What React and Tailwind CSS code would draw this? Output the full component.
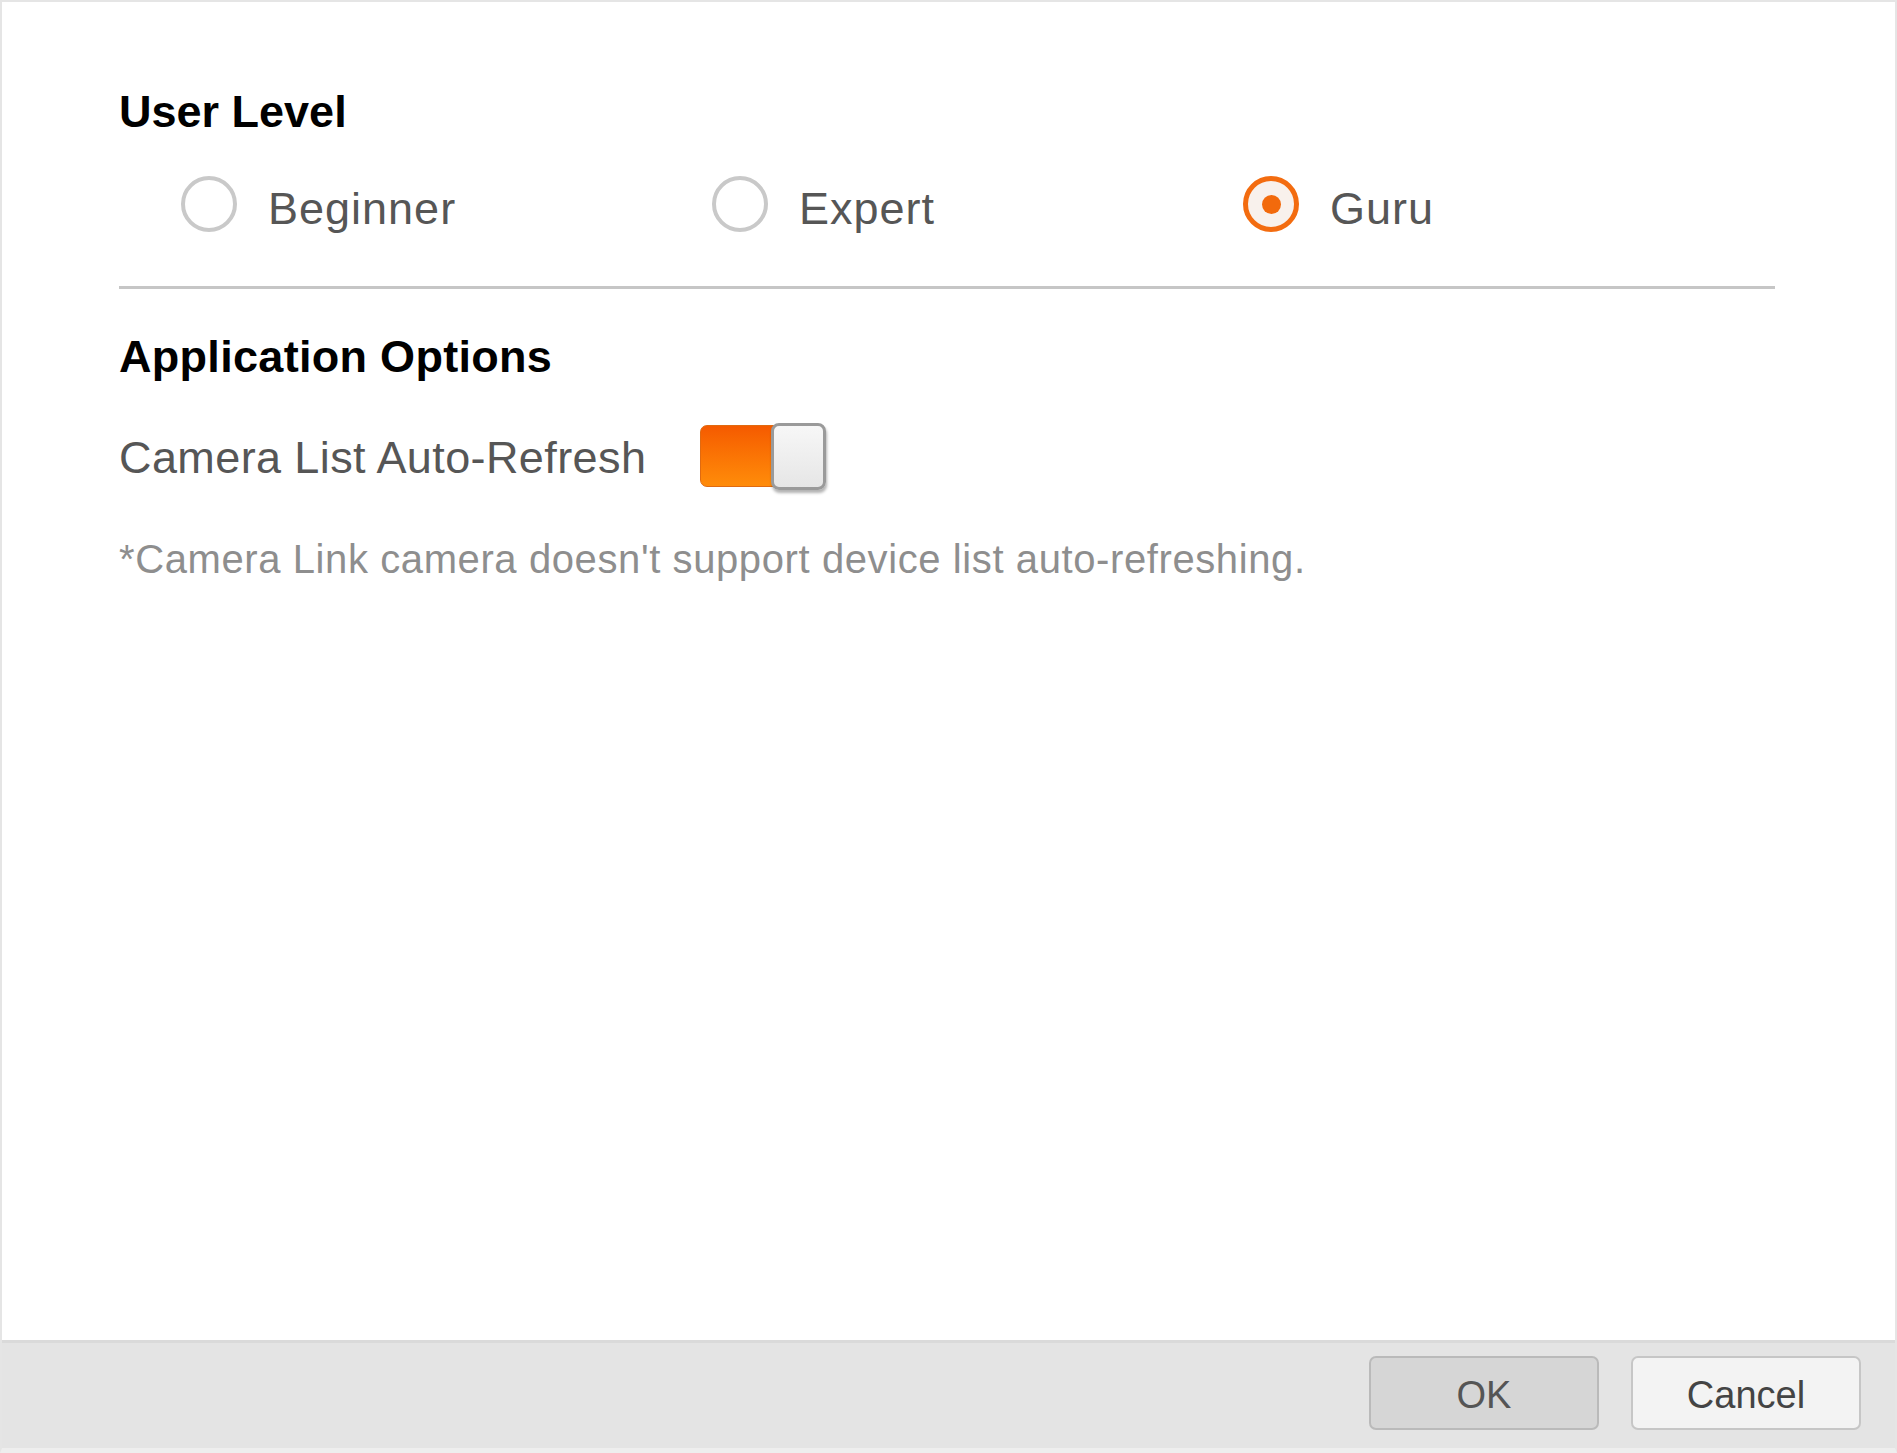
import React, { useState } from "react";

const levels = ["Beginner", "Expert", "Guru"];

const Radio = ({ label, checked, onClick }) => (
  <button type="button" onClick={onClick} className="flex items-start w-[531px] text-left">
    {checked ? (
      <span className="w-[56px] h-[56px] rounded-full border-[5px] border-[#f36c10] bg-[#f8f1ec] flex items-center justify-center shrink-0">
        <span className="w-[19px] h-[19px] rounded-full bg-[#f26a0c]" />
      </span>
    ) : (
      <span className="w-[56px] h-[56px] rounded-full border-[4px] border-[#c9c9c9] bg-white shrink-0" />
    )}
    <span className="ml-[31px] mt-[5px] text-[45px] leading-[55px] tracking-[1px] text-[#565656]">{label}</span>
  </button>
);

const Settings = () => {
  const [level, setLevel] = useState("Guru");
  const [autoRefresh, setAutoRefresh] = useState(true);

  return (
    <div
      className="w-full h-[1453px] flex flex-col bg-white border-x-2 border-t-2 border-[#e5e5e5] border-b-[5px] border-b-[#eeeeee]"
      style={{ fontFamily: '"Liberation Sans", Arial, sans-serif' }}
    >
      <div className="flex-1 pl-[117px] pr-[120px] pt-[84px]">
        {/* User level */}
        <h2 className="text-[45px] leading-[52px] font-bold text-black">User Level</h2>
        <div className="flex pl-[62px] mt-[38px]">
          {levels.map((l) => (
            <Radio key={l} label={l} checked={level === l} onClick={() => setLevel(l)} />
          ))}
        </div>

        <div className="mt-[50px] border-t-[3px] border-[#c6c6c6]" />

        {/* Application options */}
        <h2 className="mt-[42px] text-[45px] leading-[52px] font-bold text-black tracking-[0.3px]">Application Options</h2>
        <div className="mt-[39px] flex items-center">
          <span className="text-[45px] leading-[66px] pt-[3px] tracking-[0.4px] text-[#565656]">Camera List Auto-Refresh</span>
          <button
            type="button"
            onClick={() => setAutoRefresh(!autoRefresh)}
            className="relative ml-[54px] w-[126px] h-[67px]"
          >
            <span
              className={
                autoRefresh
                  ? "absolute left-0 top-[2px] w-[120px] h-[62px] rounded-[7px] bg-gradient-to-b from-[#f55a00] to-[#ff8c0a] border border-[#e06a10]"
                  : "absolute left-0 top-[2px] w-[120px] h-[62px] rounded-[7px] bg-[#d0d0d0] border border-[#b8b8b8]"
              }
            />
            <span
              className={
                autoRefresh
                  ? "absolute right-0 top-0 w-[55px] h-[67px] rounded-[8px] border-[3px] border-[#9a9a9a] bg-gradient-to-b from-[#f7f7f7] to-[#e6e6e6] shadow-[1px_3px_3px_rgba(0,0,0,0.3)]"
                  : "absolute left-0 top-0 w-[55px] h-[67px] rounded-[8px] border-[3px] border-[#9a9a9a] bg-gradient-to-b from-[#f7f7f7] to-[#e6e6e6] shadow-[1px_3px_3px_rgba(0,0,0,0.3)]"
              }
            />
          </button>
        </div>
        <p className="mt-[44px] text-[40px] leading-[48px] text-[#8e8e8e] tracking-[0.6px]">
          *Camera Link camera doesn't support device list auto-refreshing.
        </p>
      </div>

      {/* Footer */}
      <div className="h-[108px] shrink-0 border-t-[3px] border-[#dadada] bg-[#e4e4e4] flex items-center justify-end gap-[32px] pr-[34px] pb-[6px]">
        <button
          type="button"
          className="w-[230px] h-[74px] rounded-[7px] border-2 border-[#bababa] bg-[#d6d6d6] text-[38px] pt-[5px] text-[#555555]"
        >
          OK
        </button>
        <button
          type="button"
          className="w-[230px] h-[74px] rounded-[7px] border-2 border-[#c6c6c6] bg-[#f3f3f3] text-[38px] pt-[5px] text-[#444444]"
        >
          Cancel
        </button>
      </div>
    </div>
  );
};

export default Settings;
